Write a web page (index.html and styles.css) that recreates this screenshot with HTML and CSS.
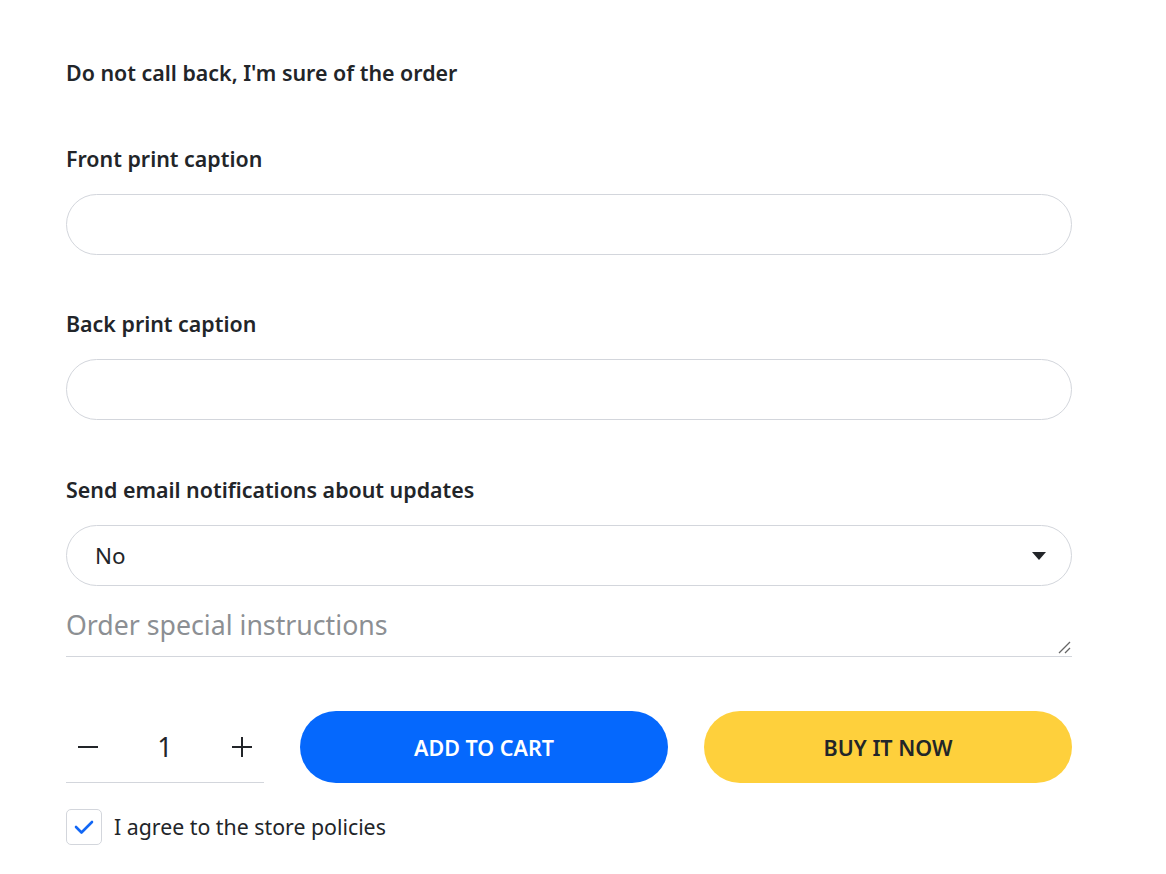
FILE: index.html
```html
<!DOCTYPE html>
<html lang="en">
<head>
<meta charset="utf-8">
<title>Product form</title>
<link rel="stylesheet" href="styles.css">
</head>
<body>
<form class="form">
  <div class="note">Do not call back, I'm sure of the order</div>

  <div class="field">
    <label class="label">Front print caption</label>
    <div class="input"></div>
  </div>

  <div class="field">
    <label class="label">Back print caption</label>
    <div class="input"></div>
  </div>

  <div class="field field-select">
    <label class="label">Send email notifications about updates</label>
    <div class="input select">
      <span class="select-value">No</span>
      <svg class="caret" width="14" height="8" viewBox="0 0 14 8"><path d="M0 0h14L7 8z" fill="#222529"/></svg>
    </div>
  </div>

  <div class="textarea">
    <span class="placeholder">Order special instructions</span>
    <svg class="grip" width="14" height="14" viewBox="0 0 14 14"><path d="M2 13L13 2M8 13l5-5" stroke="#666" stroke-width="1.3" fill="none"/></svg>
  </div>

  <div class="actions">
    <div class="qty">
      <span class="qty-btn">
        <svg width="22" height="22" viewBox="0 0 22 22"><path d="M1 11h20" stroke="#222529" stroke-width="2"/></svg>
      </span>
      <span class="qty-value">1</span>
      <span class="qty-btn">
        <svg width="22" height="22" viewBox="0 0 22 22"><path d="M1 11h20M11 1v20" stroke="#222529" stroke-width="2"/></svg>
      </span>
    </div>
    <button type="button" class="btn btn-cart">ADD TO CART</button>
    <button type="button" class="btn btn-buy">BUY IT NOW</button>
  </div>

  <label class="agree">
    <span class="checkbox">
      <svg width="20" height="16" viewBox="0 0 20 16"><path d="M2 8l5.5 5.5L18 3" stroke="#1267f5" stroke-width="2.6" fill="none" stroke-linecap="round" stroke-linejoin="round"/></svg>
    </span>
    <span class="agree-text">I agree to the store policies</span>
  </label>
</form>
</body>
</html>
```

FILE: styles.css
```css
* { box-sizing: border-box; }

html, body {
  margin: 0;
  padding: 0;
  background: #ffffff;
}

body {
  font-family: "Noto Sans", "Open Sans", "Liberation Sans", sans-serif;
  color: #222529;
}

.form {
  width: 1006px;
  margin-left: 66px;
  padding-top: 59px;
  display: flex;
  flex-direction: column;
}

.note {
  font-size: 21.4px;
  font-weight: 600;
  line-height: 28px;
  margin-bottom: 58px;
}

.field {
  display: flex;
  flex-direction: column;
  margin-bottom: 55px;
}

.field-select {
  margin-top: 1px;
  margin-bottom: 0;
}

.label {
  font-size: 21.4px;
  font-weight: 600;
  line-height: 28px;
  margin-bottom: 21px;
}

.input {
  height: 61px;
  border: 1px solid #d3d6dc;
  border-radius: 31px;
  background: #fff;
}

.select {
  display: flex;
  align-items: center;
  justify-content: space-between;
  padding: 0 25px 0 28px;
}

.select-value {
  font-size: 22.4px;
  line-height: 28px;
  color: #222529;
}

.caret {
  display: block;
}

.textarea {
  position: relative;
  height: 71px;
  border-bottom: 1px solid #d3d6dc;
  padding-top: 23px;
}

.placeholder {
  display: block;
  font-size: 26.7px;
  line-height: 32px;
  color: #8c8f93;
}

.grip {
  position: absolute;
  right: 1px;
  bottom: 2px;
}

.actions {
  display: flex;
  align-items: center;
  gap: 36px;
  margin-top: 54px;
}

.qty {
  width: 198px;
  height: 72px;
  display: flex;
  align-items: center;
  justify-content: space-between;
  border-bottom: 1px solid #d3d6dc;
  padding: 0 11px 0 11px;
}

.qty-btn {
  display: flex;
  width: 22px;
  height: 22px;
}

.qty-value {
  font-size: 26.7px;
  line-height: 32px;
  color: #222529;
}

.btn {
  flex: 1;
  height: 72px;
  border: none;
  border-radius: 36px;
  font-family: "Noto Sans", "Open Sans", "Liberation Sans", sans-serif;
  font-size: 21.5px;
  font-weight: 600;
  letter-spacing: 0;
  cursor: pointer;
}

.btn-cart {
  background: #0568fd;
  color: #ffffff;
}

.btn-buy {
  background: #fed03c;
  color: #222529;
}

.agree {
  display: flex;
  align-items: center;
  gap: 12px;
  margin-top: 26px;
}

.checkbox {
  width: 36px;
  height: 36px;
  border: 1px solid #d3d6dc;
  border-radius: 5px;
  display: flex;
  align-items: center;
  justify-content: center;
}

.agree-text {
  font-size: 21.3px;
  line-height: 28px;
  color: #222529;
}
```
